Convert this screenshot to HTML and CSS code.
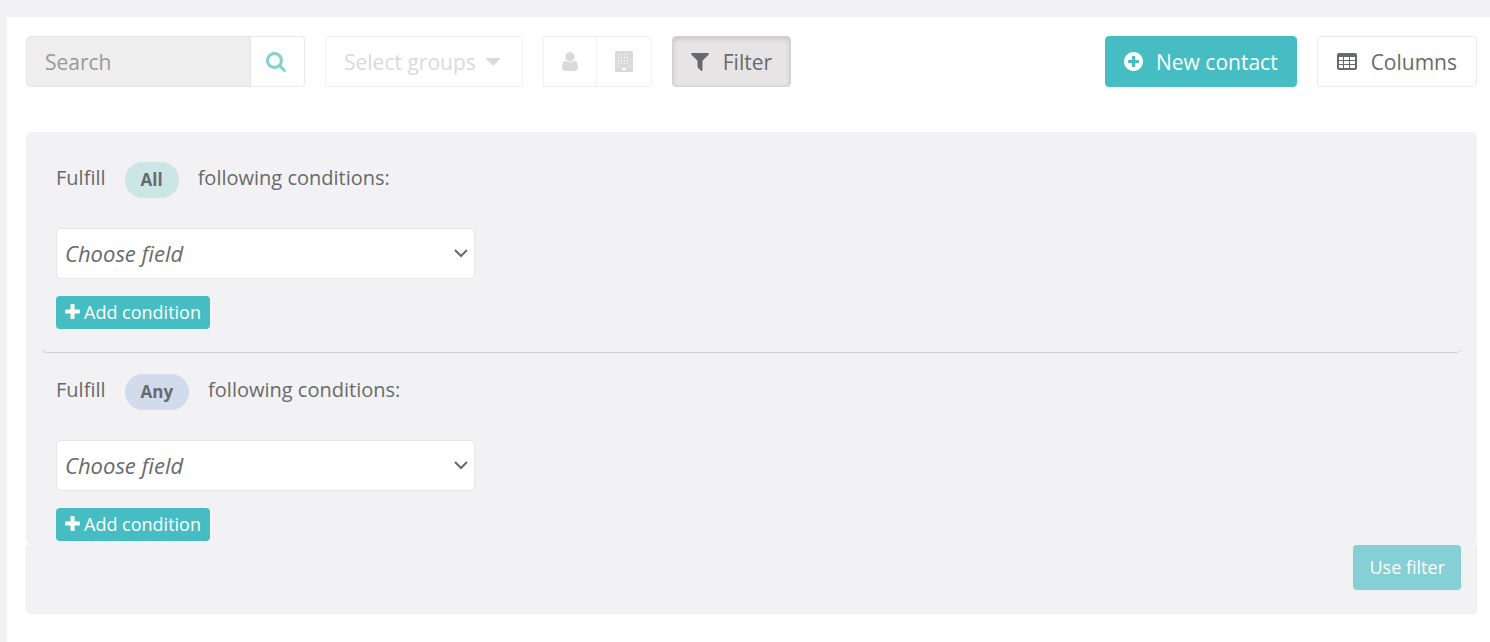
FILE: index.html
```
<!DOCTYPE html>
<html lang="en">

<head>
    <meta charset="UTF-8">
    <meta name="viewport" content="width=device-width, initial-scale=1.0">
    <title>Contacts</title>
    <link rel="stylesheet" href="styles.css">
</head>

<body>
    <main class="page">
        <div class="toolbar">
            <form class="search">
                <input type="text" id="search" placeholder="Search" aria-label="Search">
                <button type="button" class="btn search-btn" aria-label="Search">
                    <svg width="20" height="20" viewBox="64 128 1664 1664"><path d="M1216 832q0-185-131.500-316.500t-316.500-131.500-316.500 131.500-131.500 316.500 131.500 316.500 316.500 131.500 316.500-131.500 131.500-316.500zm512 832q0 52-38 90t-90 38q-54 0-90-38l-343-342q-179 124-399 124-143 0-273.500-55.500t-225-150-150-225-55.500-273.500 55.500-273.500 150-225 225-150 273.500-55.500 273.500 55.500 225 150 150 225 55.500 273.500q0 220-124 399l343 343q37 37 37 90z"/></svg>
                </button>
            </form>

            <button type="button" class="btn groups-btn">
                Select groups
                <svg width="14" height="8" viewBox="0 0 14 8"><path d="M1 0h12q1.500 .5 .5 1.500l-5.500 5.500q-1 1-2 0l-5.500-5.500q-1-1 .5-1.500z"/></svg>
            </button>

            <div class="btn-group">
                <button type="button" class="btn" aria-label="Persons">
                    <svg width="16" height="19" viewBox="256 128 1280 1536"><path d="M1536 1399q0 109-62.500 187t-150.500 78h-854q-88 0-150.500-78t-62.500-187q0-85 8.500-160.500t31.500-152 58.500-131 94-89 134.500-34.500q131 128 313 128t313-128q76 0 134.500 34.500t94 89 58.500 131 31.500 152 8.500 160.500zm-256-887q0 159-112.500 271.500t-271.500 112.500-271.500-112.500-112.500-271.500 112.500-271.500 271.500-112.500 271.500 112.500 112.500 271.500z"/></svg>
                </button>
                <button type="button" class="btn" aria-label="Companies">
                    <svg width="18" height="21" viewBox="0 0 18 21">
                        <path d="M0 0h18v21h-18z"/>
                        <path class="windows" d="M3 3.500h12M3 6.500h12M3 9.500h12M3 12.500h12M3 15.500h2M14 15.500h1"/>
                        <rect class="door" x="7" y="17" width="4" height="2"/>
                    </svg>
                </button>
            </div>

            <button type="button" class="btn filter-btn">
                <svg width="18" height="18" viewBox="190 256 1412 1408"><path d="M1595 295q17 41-14 70l-493 493v742q0 42-39 59-13 5-25 5-27 0-45-19l-256-256q-19-19-19-45v-486l-493-493q-31-29-14-70 17-39 59-39h1280q42 0 59 39z"/></svg>
                Filter
            </button>

            <div class="actions">
                <button type="button" class="btn btn-primary">
                    <svg width="19" height="19" viewBox="128 128 1536 1536"><path d="M1344 960v-128q0-26-19-45t-45-19h-256v-256q0-26-19-45t-45-19h-128q-26 0-45 19t-19 45v256h-256q-26 0-45 19t-19 45v128q0 26 19 45t45 19h256v256q0 26 19 45t45 19h128q26 0 45-19t19-45v-256h256q26 0 45-19t19-45zm320-64q0 209-103 385.500t-279.500 279.500-385.500 103-385.500-103-279.500-279.500-103-385.500 103-385.500 279.500-279.500 385.500-103 385.500 103 279.500 279.500 103 385.500z"/></svg>
                    New contact
                </button>
                <button type="button" class="btn columns-btn">
                    <svg width="20" height="17" viewBox="0 0 20 17"><path fill-rule="evenodd" d="M2 0h16q2 0 2 2v13q0 2-2 2h-16q-2 0-2-2v-13q0-2 2-2zM2 4v3h4v-3zM7 4v3h5v-3zM13 4v3h5v-3zM2 8v3h4v-3zM7 8v3h5v-3zM13 8v3h5v-3zM2 12v3h4v-3zM7 12v3h5v-3zM13 12v3h5v-3z"/></svg>
                    Columns
                </button>
            </div>
        </div>

        <form class="filter">
            <div class="filter-body">
                <section class="conditions">
                    <p class="rule">Fulfill <span class="badge badge-all">All</span> following conditions:</p>
                    <div class="field">
                        <select aria-label="Field for all conditions">
                            <option>Choose field</option>
                        </select>
                        <svg width="14" height="9" viewBox="0 0 14 9"><path d="M1 1l6 6 6-6"/></svg>
                    </div>
                    <button type="button" class="add-btn">
                        <svg width="15" height="15" viewBox="192 128 1408 1408"><path d="M1600 736v192q0 40-28 68t-68 28h-416v416q0 40-28 68t-68 28h-192q-40 0-68-28t-28-68v-416h-416q-40 0-68-28t-28-68v-192q0-40 28-68t68-28h416v-416q0-40 28-68t68-28h192q40 0 68 28t28 68v416h416q40 0 68 28t28 68z"/></svg>
                        Add condition
                    </button>
                </section>

                <section class="conditions">
                    <p class="rule">Fulfill <span class="badge badge-any">Any</span> following conditions:</p>
                    <div class="field">
                        <select aria-label="Field for any condition">
                            <option>Choose field</option>
                        </select>
                        <svg width="14" height="9" viewBox="0 0 14 9"><path d="M1 1l6 6 6-6"/></svg>
                    </div>
                    <button type="button" class="add-btn">
                        <svg width="15" height="15" viewBox="192 128 1408 1408"><path d="M1600 736v192q0 40-28 68t-68 28h-416v416q0 40-28 68t-68 28h-192q-40 0-68-28t-28-68v-416h-416q-40 0-68-28t-28-68v-192q0-40 28-68t68-28h416v-416q0-40 28-68t68-28h192q40 0 68 28t28 68v416h416q40 0 68 28t28 68z"/></svg>
                        Add condition
                    </button>
                </section>
            </div>

            <div class="filter-footer">
                <button type="button" class="use-btn">Use filter</button>
            </div>
        </form>
    </main>
</body>

</html>
```
FILE: styles.css
```
* {
    box-sizing: border-box;
}

body {
    margin: 0;
    padding: 17px 0 0 7px;
    min-height: 100vh;
    display: flex;
    background-color: #f2f2f4;
    color: #676a6c;
    font-family: "Open Sans", "Noto Sans", sans-serif;
    font-size: 20px;
}

button,
input,
select {
    font-family: inherit;
    color: inherit;
}

button {
    cursor: pointer;
}

svg {
    fill: currentColor;
    flex: none;
}

.page {
    flex: 1;
    background-color: #fff;
    padding: 19px 13px 28px 19px;
}

/* Toolbar */
.toolbar {
    display: flex;
    align-items: center;
    gap: 20px;
    margin-bottom: 45px;
}

.btn {
    display: flex;
    align-items: center;
    justify-content: center;
    gap: 14px;
    height: 51px;
    padding: 0 18px;
    border: 1px solid #e7eaec;
    border-radius: 4px;
    background-color: #fff;
    font-size: 21px;
    white-space: nowrap;
}

.search {
    display: flex;
}

.search input {
    width: 225px;
    height: 51px;
    padding: 0 18px;
    border: 1px solid #e3e3e3;
    border-radius: 5px 0 0 5px;
    background-color: #eee;
    font-size: 21px;
}

.search input::placeholder {
    color: #999;
    opacity: 1;
}

.search-btn {
    width: 54px;
    padding: 0 4px 0 0;
    border-left: 0;
    border-radius: 0 4px 4px 0;
    color: #84d1d4;
}

.groups-btn {
    gap: 10px;
    padding: 0 22px 0 18px;
    border-color: #f1f1f2;
    color: #dadada;
}

.btn-group {
    display: flex;
}

.btn-group .btn {
    width: 54px;
    padding: 0;
    border-color: #f1f1f2;
    border-radius: 0;
    color: #dadada;
}

.btn-group .btn + .btn {
    width: 55px;
    border-left: 0;
    border-radius: 0 4px 4px 0;
}

.windows {
    stroke: #fff;
    stroke-dasharray: 1 2;
}

.door {
    fill: #fff;
}

.filter-btn {
    border-color: #d2d2d2;
    background-color: #e6e4e5;
    box-shadow: inset 0 2px 5px rgba(0, 0, 0, 0.15);
}

.actions {
    display: flex;
    gap: 20px;
    margin-left: auto;
}

.btn-primary {
    gap: 13px;
    border-color: #46bdc3;
    background-color: #46bdc3;
    color: #fff;
}

.columns-btn {
    padding: 0 19px;
}

/* Filter panel */
.filter-body {
    padding: 0 16px;
    border-radius: 5px;
    background-color: #f2f2f4;
}

.conditions {
    padding: 30px 14px 23px;
    border-radius: 5px;
}

.conditions:first-child {
    border-bottom: 1px solid #cdced1;
}

.conditions + .conditions {
    padding-top: 21px;
    padding-bottom: 4px;
}

.rule {
    display: flex;
    gap: 19px;
    height: 36px;
    margin: 0 0 30px;
    line-height: 32px;
}

.badge {
    padding: 0 16px;
    border-radius: 18px;
    font-size: 17px;
    font-weight: bold;
    line-height: 36px;
}

.badge-all {
    background-color: #cce6e6;
}

.badge-any {
    background-color: #d2dbec;
}

.field {
    position: relative;
    max-width: 419px;
    margin-bottom: 17px;
}

.field select {
    display: block;
    width: 100%;
    height: 51px;
    padding: 0 8px 2px;
    border: 1px solid #e3e4e7;
    border-radius: 5px;
    background-color: #fff;
    font-size: 22px;
    font-style: italic;
    appearance: none;
}

/* Arrow over the select */
.field svg {
    position: absolute;
    top: 21px;
    right: 7px;
    fill: none;
    stroke: currentColor;
    stroke-width: 2;
    pointer-events: none;
}

.add-btn {
    display: flex;
    align-items: center;
    gap: 4px;
    height: 33px;
    padding: 0 9px 2px;
    border: 0;
    border-radius: 4px;
    background-color: #46bdc3;
    color: #fff;
    font-size: 18px;
}

.filter-footer {
    display: flex;
    justify-content: flex-end;
    padding: 0 15px 23px;
    border: 1px solid #ededef;
    border-top: 0;
    border-radius: 0 0 5px 5px;
    background-color: #f2f2f4;
}

.use-btn {
    height: 45px;
    padding: 0 16px 2px;
    border: 0;
    border-radius: 4px;
    background-color: #84d0d4;
    color: #fff;
    font-size: 18px;
}
```
